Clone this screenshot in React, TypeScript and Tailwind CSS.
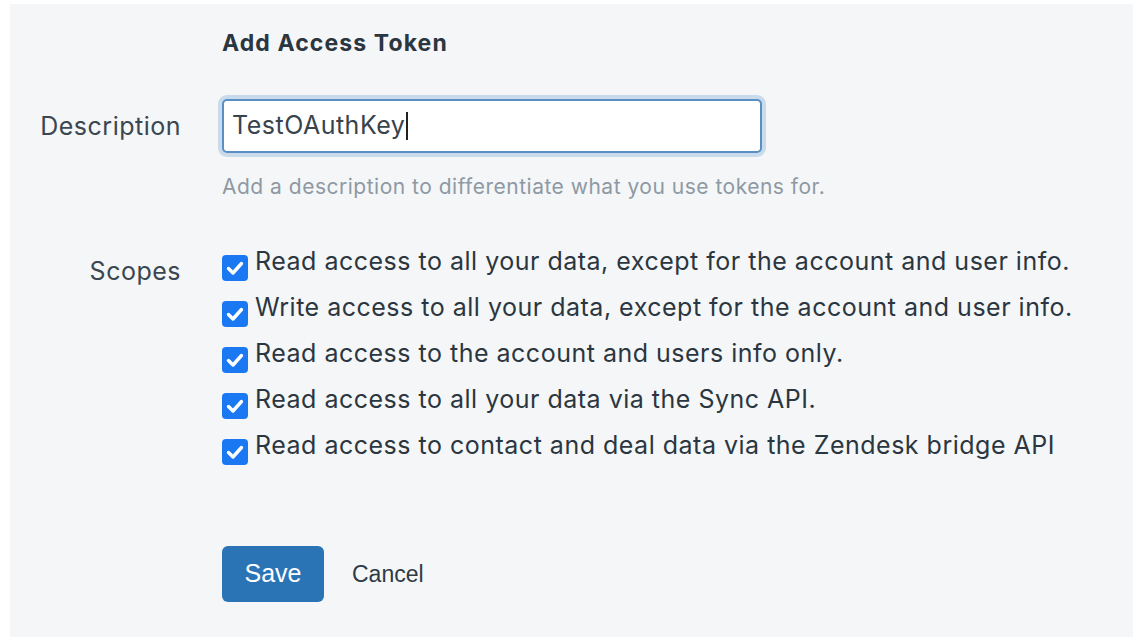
import React, { useState } from 'react';

const SCOPES = [
  'Read access to all your data, except for the account and user info.',
  'Write access to all your data, except for the account and user info.',
  'Read access to the account and users info only.',
  'Read access to all your data via the Sync API.',
  'Read access to contact and deal data via the Zendesk bridge API',
];

function CheckIcon() {
  return (
    <svg viewBox="0 0 26 26" className="w-[26px] h-[26px] shrink-0">
      <rect x="0" y="0" width="26" height="26" rx="4" fill="#1a78f2" />
      <path
        d="M6.5 13.5 L11 18 L19.5 8.5"
        fill="none"
        stroke="#ffffff"
        strokeWidth="3.4"
        strokeLinecap="round"
        strokeLinejoin="round"
      />
    </svg>
  );
}

export default function App() {
  const [description, setDescription] = useState('TestOAuthKey');

  return (
    <div className="w-[1142px] h-[642px] bg-white pt-[4px] pl-[10px] pr-[9px] pb-[5px] font-['Inter',sans-serif] text-[#2f3a44]">
      <div className="h-full bg-[#f4f6f8] pt-[25px]">
        {/* Header */}
        <div className="grid grid-cols-[171px_1fr] gap-x-[41px]">
          <div />
          <h2 className="text-[23px] leading-[28px] font-bold tracking-[1.1px] text-[#2b3640]">Add Access Token</h2>
        </div>

        {/* Description */}
        <div className="grid grid-cols-[171px_1fr] gap-x-[41px] mt-[42px]">
          <label className="text-right text-[25px] leading-[54px] tracking-[0.5px] text-[#3a4650]">Description</label>
          <div>
            <div className="w-[540px] h-[54px] rounded-[5px] border-2 border-[#5a8fc6] bg-white shadow-[0_0_0_4px_#c9dbea] flex items-center px-[8px]">
              <span className="text-[25px] tracking-[0.5px] text-[#38434c]">{description}</span>
              <span className="w-[2px] h-[28px] bg-[#222] ml-[1px]" />
              <input
                value={description}
                onChange={(e) => setDescription(e.target.value)}
                className="hidden"
              />
            </div>
            <p className="mt-[22px] text-[21px] leading-[24px] tracking-[0.5px] text-[#8e99a3]">
              Add a description to differentiate what you use tokens for.
            </p>
          </div>
        </div>

        {/* Scopes */}
        <div className="grid grid-cols-[171px_1fr] gap-x-[41px] mt-[47px]">
          <label className="text-right text-[25px] leading-[32px] tracking-[0.5px] text-[#3a4650] mt-[9px]">Scopes</label>
          <div className="flex flex-col gap-[14px]">
            {SCOPES.map((s) => (
              <div key={s} className="flex items-start gap-[7px] h-[32px]">
                <div className="pt-[9px]">
                  <CheckIcon />
                </div>
                <span className="text-[25px] leading-[30px] tracking-[0.5px] text-[#2b3640] whitespace-nowrap">{s}</span>
              </div>
            ))}
          </div>
        </div>

        {/* Actions */}
        <div className="grid grid-cols-[171px_1fr] gap-x-[41px] mt-[84px]">
          <div />
          <div className="flex items-center gap-[28px]">
            <button className="w-[102px] h-[56px] rounded-[6px] bg-[#2a74b6] text-white text-[25px] font-['Liberation_Sans',sans-serif]">
              Save
            </button>
            <button className="text-[23px] text-[#2f3a44] font-['Liberation_Sans',sans-serif]">Cancel</button>
          </div>
        </div>
      </div>
    </div>
  );
}
